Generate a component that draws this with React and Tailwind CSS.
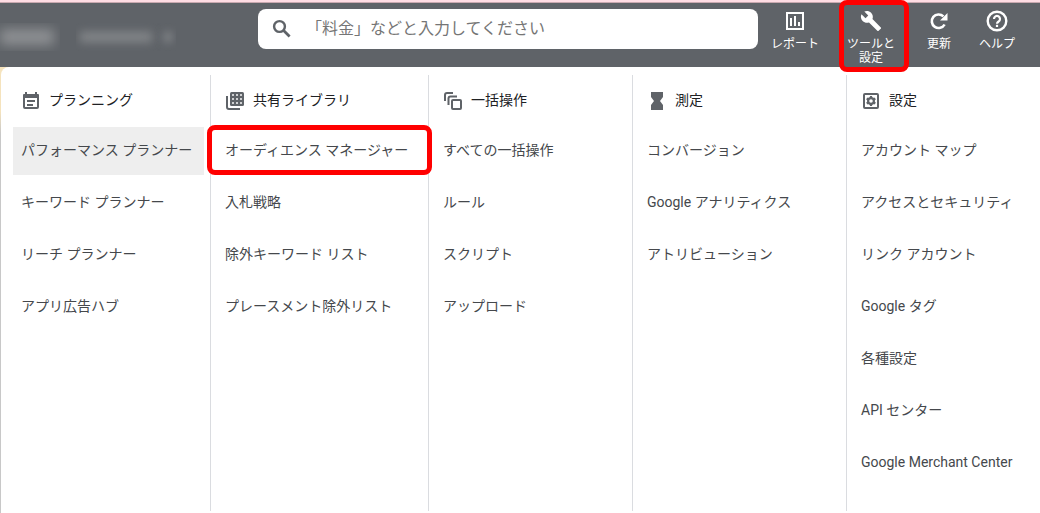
import React from 'react';

const SearchIcon = () => (
  <svg width="24" height="24" viewBox="0 0 24 24" fill="none" stroke="currentColor" className="shrink-0" aria-hidden="true">
    <circle cx="9.5" cy="9.5" r="5.4" strokeWidth="2.4" />
    <path d="M13.6 13.6l6 6" strokeWidth="2.8" />
  </svg>
);

const ReportIcon = () => (
  <svg width="20" height="20" viewBox="0 0 20 20" fill="none" aria-hidden="true">
    <path d="M2 2h16v16H2z" stroke="currentColor" strokeWidth="2" />
    <path d="M5 7h2v8H5zM9 5h2v10H9zM13 11h2v4h-2z" fill="currentColor" />
  </svg>
);

const ToolsIcon = () => (
  <svg width="22" height="22" viewBox="0 0 24 24" fill="currentColor" className="-m-px" aria-hidden="true">
    <path d="M22.7 19l-9.1-9.1c.9-2.3.4-5-1.5-6.9-2-2-5-2.4-7.4-1.3L9 6 6 9 1.6 4.7C.4 7.1.9 10.1 2.9 12.1c1.9 1.9 4.6 2.4 6.9 1.5l9.1 9.1c.4.4 1 .4 1.4 0l2.3-2.3c.5-.4.5-1.1.1-1.4z" />
  </svg>
);

const RefreshIcon = () => (
  <svg width="20" height="20" viewBox="0 0 20 20" fill="none" aria-hidden="true">
    <path d="M15.6 13.5A6.8 6.8 0 1 1 14.4 5.4" stroke="currentColor" strokeWidth="2.6" />
    <path d="M18.5 2v7.5H11z" fill="currentColor" />
  </svg>
);

const HelpIcon = () => (
  <svg width="22" height="22" viewBox="0 0 22 22" fill="none" stroke="currentColor" className="-m-px" aria-hidden="true">
    <circle cx="11" cy="11" r="9.3" strokeWidth="2.4" />
    <path d="M8 9a3 3 0 1 1 4.6 2.5c-1 .7-1.6 1.2-1.6 2.2" strokeWidth="2.2" />
    <path d="M9.9 14.8h2.2V17H9.9z" fill="currentColor" stroke="none" />
  </svg>
);

const PlanIcon = () => (
  <svg width="18" height="18" viewBox="0 0 18 18" fill="none" aria-hidden="true">
    <path d="M2 5v10a1 1 0 0 0 1 1h12a1 1 0 0 0 1-1V5" stroke="currentColor" strokeWidth="2" />
    <path d="M1 6V3a1 1 0 0 1 1-1h1V0h2v2h8V0h2v2h1a1 1 0 0 1 1 1v3z" fill="currentColor" />
    <path d="M5 8h8v2H5zM5 12h6v2H5z" fill="currentColor" />
  </svg>
);

const LibraryIcon = () => (
  <svg width="18" height="18" viewBox="0 0 18 18" fill="none" aria-hidden="true">
    <path d="M1 4v11a2 2 0 0 0 2 2h11" stroke="currentColor" strokeWidth="2" />
    <rect x="4" y="0" width="14" height="14" rx="1.5" fill="currentColor" />
    <path d="M6 2h2v2H6zM10 2h2v2h-2zM14 2h2v2h-2zM6 6h2v2H6zM10 6h2v2h-2zM14 6h2v2h-2zM6 10h2v2H6zM10 10h2v2h-2zM14 10h2v2h-2z" fill="#fff" fillOpacity="0.7" />
  </svg>
);

const BulkIcon = () => (
  <svg width="18" height="18" viewBox="0 0 18 18" fill="none" stroke="currentColor" strokeWidth="2" aria-hidden="true">
    <path d="M1 9V3a2 2 0 0 1 2-2h6" />
    <path d="M4.5 13V6.5a2 2 0 0 1 2-2H13" />
    <rect x="8" y="8" width="9" height="9" rx="1" />
  </svg>
);

const HourglassIcon = () => (
  <svg width="18" height="18" viewBox="0 0 18 18" fill="currentColor" aria-hidden="true">
    <path d="M3 0h12v5l-3 4 3 4v5H3v-5l3-4-3-4z" />
  </svg>
);

const SettingsIcon = () => (
  <svg width="18" height="18" viewBox="0 0 18 18" fill="none" stroke="currentColor" aria-hidden="true">
    <rect x="2" y="2" width="14" height="14" rx="1" strokeWidth="2" />
    <circle cx="9" cy="9" r="2.9" strokeWidth="2.2" />
    <path d="M9 4v2M9 12v2M4.7 6.5l1.7 1M11.6 10.5l1.7 1M4.7 11.5l1.7-1M11.6 7.5l1.7-1" strokeWidth="2.2" />
  </svg>
);

const columns = [
  {
    title: 'プランニング',
    icon: <PlanIcon />,
    items: ['パフォーマンス プランナー', 'キーワード プランナー', 'リーチ プランナー', 'アプリ広告ハブ'],
  },
  {
    title: '共有ライブラリ',
    icon: <LibraryIcon />,
    items: ['オーディエンス マネージャー', '入札戦略', '除外キーワード リスト', 'プレースメント除外リスト'],
  },
  {
    title: '一括操作',
    icon: <BulkIcon />,
    items: ['すべての一括操作', 'ルール', 'スクリプト', 'アップロード'],
  },
  {
    title: '測定',
    icon: <HourglassIcon />,
    items: ['コンバージョン', 'Google アナリティクス', 'アトリビューション'],
  },
  {
    title: '設定',
    icon: <SettingsIcon />,
    items: ['アカウント マップ', 'アクセスとセキュリティ', 'リンク アカウント', 'Google タグ', '各種設定', 'API センター', 'Google Merchant Center'],
  },
];

const selected = 'パフォーマンス プランナー';
const marked = 'オーディエンス マネージャー';

const MenuColumn = ({ title, icon, items }) => (
  <section className="border-r border-[#dadce0] px-1.5 pb-6 last:border-r-0">
    <h2 className="flex h-13 items-center gap-2 px-2 pb-0.5 text-sm text-[#202124]">
      <span className="flex w-5 justify-center pt-0.5 text-[#5f6368]">{icon}</span>
      {title}
    </h2>
    <ul className="flex flex-col gap-1">
      {items.map((item) => (
        <li key={item} className="relative">
          <a
            href="#"
            className={`flex h-12 items-center px-2 pb-0.5 text-sm whitespace-nowrap text-[#45484c] ${item === selected ? 'bg-[#eeeeee]' : ''}`}
          >
            {item}
          </a>
          {item === marked && (
            <span className="pointer-events-none absolute -inset-x-2.5 -top-0.5 bottom-0 z-10 rounded-lg border-5 border-[#ff0000]"></span>
          )}
        </li>
      ))}
    </ul>
  </section>
);

const App = () => {
  return (
    <div className="min-h-screen bg-white font-['Roboto','Noto_Sans_CJK_JP',sans-serif]">
      <div className="h-[3px] border-b border-[#c9a9b0] bg-[#ffdde4]"></div>

      {/* Header */}
      <header className="flex h-16 bg-[#5f6368] text-white">
        {/* Account name, hidden */}
        <div className="flex w-[258px] shrink-0 items-center gap-4 pt-1">
          <div className="flex h-7 w-[60px] items-center overflow-hidden">
            <div className="h-4 w-[54px] bg-[#8e9093] blur-[6px]"></div>
          </div>
          <div className="flex h-7 w-[100px] items-center gap-3 overflow-hidden px-1">
            <div className="h-2.5 w-[74px] bg-[#85888b] blur-[5px]"></div>
            <div className="h-2.5 w-2 bg-[#85888b] blur-[4px]"></div>
          </div>
        </div>

        {/* Search */}
        <label className="mt-1.5 flex h-10 min-w-0 max-w-[500px] flex-1 items-center gap-3 rounded-lg bg-white px-3 text-[#5f6368]">
          <SearchIcon />
          <input
            type="text"
            aria-label="検索"
            placeholder="「料金」などと入力してください"
            className="w-full min-w-0 bg-transparent text-base outline-none placeholder:text-[#757575]"
          />
        </label>

        {/* Tools */}
        <nav className="ml-auto flex items-start gap-6 pt-2 pr-[25px] text-xs leading-[14px] whitespace-nowrap">
          <button type="button" className="flex flex-col items-center gap-1.5">
            <ReportIcon />
            レポート
          </button>
          <button type="button" className="relative flex flex-col items-center gap-1.5 px-1">
            <ToolsIcon />
            <span>ツールと<br />設定</span>
            <span className="pointer-events-none absolute -right-2.5 -left-1 -top-[11px] z-10 h-[72px] rounded-lg border-5 border-[#ff0000]"></span>
          </button>
          <button type="button" className="flex flex-col items-center gap-1.5 px-1">
            <RefreshIcon />
            更新
          </button>
          <button type="button" className="flex flex-col items-center gap-1.5">
            <HelpIcon />
            ヘルプ
          </button>
        </nav>
      </header>

      {/* Menu panel */}
      <div className="bg-linear-to-b from-[#f5e3bd] from-10% to-[#c8c8c8] to-15% pl-px">
        <main className="grid grid-cols-[204fr_218fr_204fr_214fr_193fr] rounded-tl-lg bg-white pt-2 pb-0.5 pl-1.5">
          {columns.map((column) => (
            <MenuColumn key={column.title} {...column} />
          ))}
        </main>
      </div>
    </div>
  );
};

export default App;
